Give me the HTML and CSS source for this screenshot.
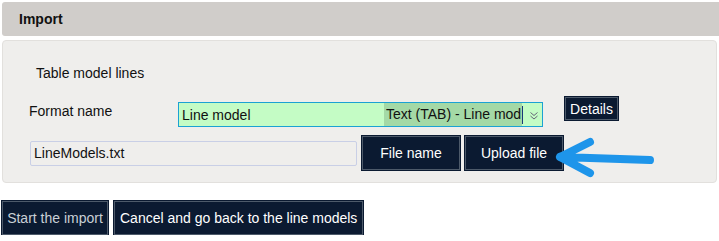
FILE: index.html
```html
<!DOCTYPE html>
<html>
<head>
<meta charset="utf-8">
<link rel="stylesheet" href="styles.css">
</head>
<body>
<div class="header">Import</div>
<div class="panel">
  <div class="title">Table model lines</div>
  <div class="row format-row">
    <label class="label">Format name</label>
    <div class="select">
      <span class="sel-text">Line model</span>
      <span class="sel-hl">Text (TAB) - Line mod</span>
      <span class="caret"></span>
      <svg class="chev" width="10" height="12" viewBox="0 0 10 12"><path d="M1.5 3.5 L5 6.5 L8.5 3.5 M1.5 7 L5 10 L8.5 7" fill="none" stroke="#667" stroke-width="1"/></svg>
    </div>
    <button class="btn btn-details">Details</button>
  </div>
  <div class="row file-row">
    <div class="file-input">LineModels.txt</div>
    <button class="btn btn-file">File name</button>
    <button class="btn btn-file">Upload file</button>
    <svg class="arrow" width="110" height="44" viewBox="0 0 110 44"><path d="M6 20 L96 23 M6 20 L36 5 M6 20 L36 36" fill="none" stroke="#1e95ea" stroke-width="8" stroke-linecap="round" stroke-linejoin="round"/></svg>
  </div>
</div>
<div class="actions">
  <button class="btn btn-action btn-start">Start the import</button>
  <button class="btn btn-action">Cancel and go back to the line models</button>
</div>
</body>
</html>
```

FILE: styles.css
```css
* { box-sizing: border-box; }
body {
  margin: 0;
  background: #ffffff;
  font-family: "Liberation Sans", Arial, sans-serif;
  font-size: 14px;
  color: #111;
}
.header {
  margin: 2px 0 0 2px;
  height: 34px;
  background: #d0cdca;
  border-radius: 3px 0 0 3px;
  font-weight: bold;
  font-size: 14px;
  padding-left: 17px;
  line-height: 34px;
}
.panel {
  margin: 4px 2px 0 2px;
  height: 143px;
  background: #efeeec;
  border: 1px solid #e2e0dd;
  border-radius: 4px;
  position: relative;
}
.title {
  margin: 24px 0 0 33px;
  font-size: 14px;
  line-height: 16px;
}
.row { display: flex; }
.format-row {
  margin-top: 16px;
  align-items: flex-start;
}
.label {
  margin: 6px 0 0 26px;
  width: 149px;
  font-size: 14px;
  line-height: 16px;
}
.select {
  margin-top: 5px;
  width: 365px;
  height: 25px;
  border: 1px solid #1ba2d3;
  background: #c4fcc5;
  display: flex;
  align-items: center;
  padding-left: 3px;
  font-size: 14px;
  color: #111;
}
.sel-text { width: 202px; }
.sel-hl {
  background: #a4d9a6;
  height: 23px;
  line-height: 23px;
  padding-left: 2px;
  width: 138px;
  white-space: nowrap;
  overflow: hidden;
}
.caret {
  width: 1px;
  height: 18px;
  background: #1b3a7a;
}
.chev { margin-left: 6px; }
.btn {
  font-family: "Liberation Sans", Arial, sans-serif;
  background: #0b1a31;
  color: #ffffff;
  border: 1px solid #4d5a6a;
  box-shadow: 0 0 0 1px #0b1a31;
  padding: 0;
  cursor: pointer;
  white-space: nowrap;
}
.btn-details {
  margin: 0 0 0 22px;
  width: 53px;
  height: 23px;
  font-size: 14px;
}
.file-row {
  margin-top: 9px;
  align-items: center;
  position: relative;
}
.file-input {
  margin-left: 27px;
  width: 327px;
  height: 25px;
  border: 1px solid #c9cfe6;
  border-radius: 2px;
  background: #efeeec;
  font-size: 14px;
  line-height: 23px;
  padding-left: 3px;
}
.btn-file {
  margin-left: 5px;
  width: 98px;
  height: 34px;
  font-size: 14px;
}
.arrow {
  position: absolute;
  left: 551px;
  top: 1px;
}
.actions {
  margin: 18px 0 0 2px;
  display: flex;
  gap: 6px;
}
.btn-action {
  height: 34px;
  font-size: 14px;
  padding: 0 5px;
}
.btn-start { color: #c9d0d6; width: 106px; padding: 0; }
```
